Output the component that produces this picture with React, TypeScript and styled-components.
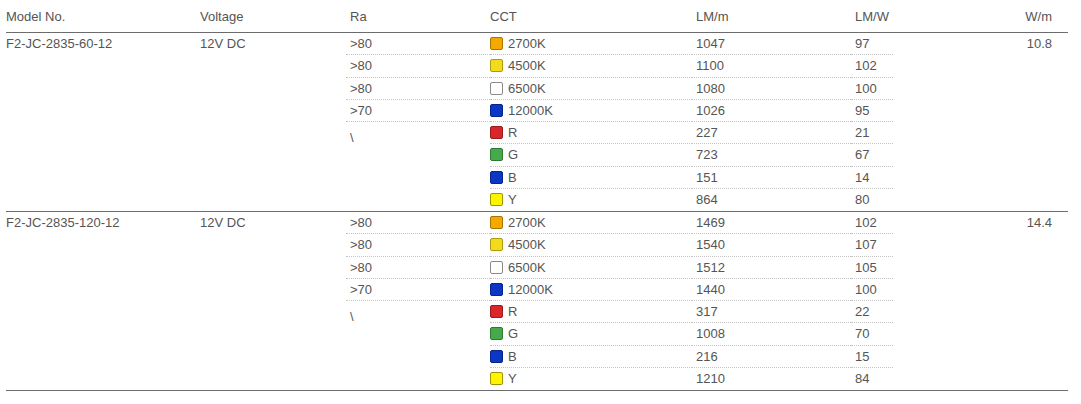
import React from "react";
import styled, { createGlobalStyle } from "styled-components";

const Global = createGlobalStyle`
  html, body { margin: 0; padding: 0; background: #ffffff; }
  body {
    font-family: "Liberation Sans", Arial, sans-serif;
    font-size: 13px;
    color: #555555;
  }
`;

const COLS = "190px 150px 144px 202px 159px 42px 175px";
const ROW_H = 22.25;

const Table = styled.div`
  width: 1062px;
  margin-left: 6px;
`;

const HeaderRow = styled.div`
  display: grid;
  grid-template-columns: ${COLS};
  height: 33px;
  box-sizing: border-box;
  border-bottom: 1px solid #6c6c6c;
  align-items: center;
`;

const HeadCell = styled.div<{ $pad?: number; $right?: boolean }>`
  padding-left: ${(p) => (p.$right ? 0 : p.$pad ?? 4)}px;
  padding-right: ${(p) => (p.$right ? 16 : 0)}px;
  text-align: ${(p) => (p.$right ? "right" : "left")};
  white-space: nowrap;
`;

const Group = styled.div`
  display: grid;
  grid-template-columns: ${COLS};
  grid-template-rows: repeat(8, ${ROW_H}px);
  border-bottom: 1px solid #6c6c6c;
`;

const Cell = styled.div<{
  $col: number;
  $row: number;
  $span?: number;
  $pad?: number;
  $right?: boolean;
  $dotted?: boolean;
  $top?: number;
}>`
  grid-column: ${(p) => p.$col};
  grid-row: ${(p) => p.$row} / span ${(p) => p.$span ?? 1};
  box-sizing: border-box;
  line-height: ${ROW_H - 1}px;
  padding-left: ${(p) => (p.$right ? 0 : p.$pad ?? 4)}px;
  padding-right: ${(p) => (p.$right ? 16 : 0)}px;
  padding-top: ${(p) => p.$top ?? 0}px;
  text-align: ${(p) => (p.$right ? "right" : "left")};
  border-bottom: ${(p) => (p.$dotted ? "1px dotted #c4c4c4" : "none")};
  white-space: nowrap;
`;

const CctCell = styled(Cell)`
  display: flex;
  align-items: center;
  gap: 5px;
`;

const Swatch = styled.span<{ $fill: string; $edge: string }>`
  display: inline-block;
  width: 13px;
  height: 13px;
  box-sizing: border-box;
  border-radius: 2px;
  background: ${(p) => p.$fill};
  border: 1px solid ${(p) => p.$edge};
  flex: none;
`;

type Row = { ra?: string; cct: string; lm: string; lw: string };
type G = { model: string; volt: string; wm: string; rows: Row[] };

const SW: Record<string, [string, string]> = {
  "2700K": ["#f3a900", "#a87600"],
  "4500K": ["#f2db1c", "#b09a10"],
  "6500K": ["#ffffff", "#8a8a8a"],
  "12000K": ["#0b36c6", "#06248c"],
  R: ["#d8262b", "#9a1a1e"],
  G: ["#46a94b", "#2e7a33"],
  B: ["#0b37c4", "#06248c"],
  Y: ["#fff300", "#9d9400"],
};

const groups: G[] = [
  {
    model: "F2-JC-2835-60-12",
    volt: "12V DC",
    wm: "10.8",
    rows: [
      { ra: ">80", cct: "2700K", lm: "1047", lw: "97" },
      { ra: ">80", cct: "4500K", lm: "1100", lw: "102" },
      { ra: ">80", cct: "6500K", lm: "1080", lw: "100" },
      { ra: ">70", cct: "12000K", lm: "1026", lw: "95" },
      { cct: "R", lm: "227", lw: "21" },
      { cct: "G", lm: "723", lw: "67" },
      { cct: "B", lm: "151", lw: "14" },
      { cct: "Y", lm: "864", lw: "80" },
    ],
  },
  {
    model: "F2-JC-2835-120-12",
    volt: "12V DC",
    wm: "14.4",
    rows: [
      { ra: ">80", cct: "2700K", lm: "1469", lw: "102" },
      { ra: ">80", cct: "4500K", lm: "1540", lw: "107" },
      { ra: ">80", cct: "6500K", lm: "1512", lw: "105" },
      { ra: ">70", cct: "12000K", lm: "1440", lw: "100" },
      { cct: "R", lm: "317", lw: "22" },
      { cct: "G", lm: "1008", lw: "70" },
      { cct: "B", lm: "216", lw: "15" },
      { cct: "Y", lm: "1210", lw: "84" },
    ],
  },
];

export default function App() {
  return (
    <>
      <Global />
      <Table>
        <HeaderRow>
          <HeadCell $pad={0}>Model No.</HeadCell>
          <HeadCell>Voltage</HeadCell>
          <HeadCell>Ra</HeadCell>
          <HeadCell $pad={0}>CCT</HeadCell>
          <HeadCell>LM/m</HeadCell>
          <HeadCell>LM/W</HeadCell>
          <HeadCell $right>W/m</HeadCell>
        </HeaderRow>
        {groups.map((g) => (
          <Group key={g.model}>
            <Cell $col={1} $row={1} $span={8} $pad={0}>
              {g.model}
            </Cell>
            <Cell $col={2} $row={1} $span={8}>
              {g.volt}
            </Cell>
            {g.rows.map((r, i) =>
              r.ra ? (
                <Cell key={"ra" + i} $col={3} $row={i + 1} $dotted>
                  {r.ra}
                </Cell>
              ) : null
            )}
            <Cell $col={3} $row={5} $span={4} $top={5}>
              \
            </Cell>
            {g.rows.map((r, i) => {
              const last = i === g.rows.length - 1;
              const [fill, edge] = SW[r.cct];
              return (
                <React.Fragment key={r.cct}>
                  <CctCell $col={4} $row={i + 1} $pad={0} $dotted={!last}>
                    <Swatch $fill={fill} $edge={edge} />
                    <span>{r.cct}</span>
                  </CctCell>
                  <Cell $col={5} $row={i + 1} $dotted={!last}>
                    {r.lm}
                  </Cell>
                  <Cell $col={6} $row={i + 1} $dotted={!last}>
                    {r.lw}
                  </Cell>
                </React.Fragment>
              );
            })}
            <Cell $col={7} $row={1} $span={8} $right>
              {g.wm}
            </Cell>
          </Group>
        ))}
      </Table>
    </>
  );
}
